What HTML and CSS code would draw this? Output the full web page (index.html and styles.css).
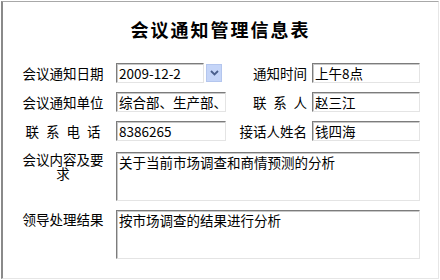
FILE: index.html
```html
<!DOCTYPE html>
<html lang="zh-CN">

<head>
	<meta charset="UTF-8">
	<title>会议通知管理信息表</title>
	<link rel="stylesheet" href="styles.css">
</head>

<body>
	<div class="panel">
		<h1 class="title">会议通知管理信息表</h1>
		<div class="form">
			<label class="lbl">会议通知日期</label>
			<div class="date-field">
				<input class="box date-input" type="text" value="2009-12-2">
				<span class="drop-btn">
					<svg width="9" height="6" viewBox="0 0 9 6"><path d="M1 1 L4.5 4.5 L8 1" fill="none" stroke="#4a5f8c" stroke-width="1.8"/></svg>
				</span>
			</div>
			<label class="lbl-r">通知时间</label>
			<input class="box" type="text" value="上午8点">

			<label class="lbl">会议通知单位</label>
			<input class="box" type="text" value="综合部、生产部、">
			<label class="lbl-r"><span class="spread narrow">联 系 人</span></label>
			<input class="box" type="text" value="赵三江">

			<label class="lbl"><span class="spread">联 系 电 话</span></label>
			<input class="box" type="text" value="8386265">
			<label class="lbl-r">接话人姓名</label>
			<input class="box" type="text" value="钱四海">

			<label class="lbl lbl-top">会议内容及要求</label>
			<textarea class="box area first-area">关于当前市场调查和商情预测的分析</textarea>

			<label class="lbl lbl-top">领导处理结果</label>
			<textarea class="box area">按市场调查的结果进行分析</textarea>
		</div>
	</div>
</body>

</html>
```

FILE: styles.css
```css
html,
body {
	margin: 0;
	padding: 0;
	background: #fff;
	color: #000;
	font-family: "Noto Sans CJK SC", "Liberation Sans", sans-serif;
	font-size: 13.5px;
}

.panel {
	box-sizing: border-box;
	width: 438px;
	height: 278px;
	margin: 1px 0 0 1px;
	border-style: solid;
	border-width: 1px 1px 1px 2px;
	border-color: #a8a8a8 #e6e6e6 #e6e6e6 #8a8a8a;
}

.title {
	margin: 0;
	padding-top: 15px;
	height: 24px;
	line-height: 24px;
	text-align: center;
	font-size: 18px;
	font-weight: bold;
	letter-spacing: 2px;
}

.form {
	display: grid;
	grid-template-columns: 98px 110px 86px 108px;
	row-gap: 9px;
	margin-top: 22px;
	padding-left: 15px;
	align-items: center;
}

.lbl {
	box-sizing: border-box;
	padding-right: 8px;
	text-align: center;
	line-height: 14px;
}

.lbl-r {
	box-sizing: border-box;
	padding-right: 5px;
	text-align: right;
	line-height: 14px;
}

.lbl-top {
	align-self: start;
	padding-top: 2px;
	padding-left: 2px;
	padding-right: 10px;
}

.spread {
	display: inline-block;
	width: 75px;
	text-align: justify;
	text-align-last: justify;
}

.spread.narrow {
	width: 54px;
}

.box {
	box-sizing: border-box;
	height: 20px;
	margin: 0;
	padding: 0 2px;
	font-family: inherit;
	font-size: 13.5px;
	color: #000;
	background: #fff;
	border: 1px solid;
	border-color: #7c7c7c #e4e4e4 #e4e4e4 #7c7c7c;
	box-shadow: inset 1px 1px 0 #c8c8c8;
	outline: none;
}

.date-field {
	display: flex;
	align-items: center;
}

.date-input {
	width: 88px;
}

.drop-btn {
	box-sizing: border-box;
	width: 16px;
	height: 18px;
	margin-left: 2px;
	display: flex;
	align-items: center;
	justify-content: center;
	background: #c5d5f8;
	border: 1px solid #b4c6ee;
}

.area {
	grid-column: 2 / 5;
	height: 49px;
	padding: 1px 2px;
	line-height: 16px;
	resize: none;
	overflow: hidden;
}

.first-area {
	margin-top: 2px;
}
```
